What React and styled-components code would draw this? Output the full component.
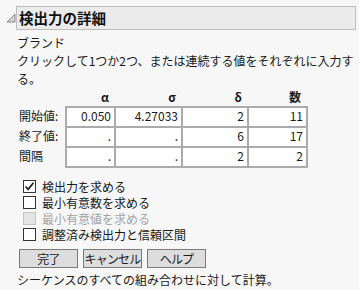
import React from "react";
import styled, { createGlobalStyle } from "styled-components";

const columns = ["α", "σ", "δ", "数"];
const rows = [
  { label: "開始値:", values: ["0.050", "4.27033", "2", "11"] },
  { label: "終了値:", values: [".", ".", "6", "17"] },
  { label: "間隔", values: [".", ".", "2", "2"] },
];
const options = [
  { text: "検出力を求める", checked: true },
  { text: "最小有意数を求める" },
  { text: "最小有意値を求める", disabled: true },
  { text: "調整済み検出力と信頼区間" },
];

function CheckMark() {
  return (
    <svg width="11" height="11" viewBox="0 0 11 11">
      <path d="M1.5 5.5 L4.2 8.3 L9.5 1.8" fill="none" stroke="#222" strokeWidth="1.8" />
    </svg>
  );
}

export default function App() {
  return (
    <Page>
      <GlobalStyle />
      <HeaderRow>
        <Disclosure width="10" height="10" viewBox="0 0 10 10">
          <polygon points="1,9 9,1 9,9" fill="#d4d4d4" stroke="#8a8a8a" strokeWidth="1" />
        </Disclosure>
        <TitleBox>検出力の詳細</TitleBox>
      </HeaderRow>
      <Content>
        <Line>ブランド</Line>
        <Line>クリックして1つか2つ、または連続する値をそれぞれに入力する。</Line>
        <Table>
          <span />
          {columns.map((c) => (
            <ColHead key={c}>{c}</ColHead>
          ))}
          {rows.map((r) => (
            <React.Fragment key={r.label}>
              <RowLabel>{r.label}</RowLabel>
              <Cells>
                {r.values.map((v, i) => (
                  <Cell key={i}>{v}</Cell>
                ))}
              </Cells>
            </React.Fragment>
          ))}
        </Table>
        <Options>
          {options.map((o) => (
            <Option key={o.text} $disabled={o.disabled}>
              <Box $disabled={o.disabled}>{o.checked && <CheckMark />}</Box>
              {o.text}
            </Option>
          ))}
        </Options>
        <Buttons>
          <Button>完了</Button>
          <Button>キャンセル</Button>
          <Button>ヘルプ</Button>
        </Buttons>
        <Line>シーケンスのすべての組み合わせに対して計算。</Line>
      </Content>
    </Page>
  );
}

const GlobalStyle = createGlobalStyle`
  body {
    margin: 0;
    background: #f7f7f7;
    font-family: "Noto Sans CJK JP", "Noto Sans", sans-serif;
    font-size: 12px;
    color: #1a1a1a;
  }
`;

const Page = styled.div`
  width: 359px;
  height: 290px;
  overflow: hidden;
`;

const HeaderRow = styled.div`
  display: flex;
  align-items: center;
  padding: 6px 3px 0 6px;
`;

const Disclosure = styled.svg`
  flex: none;
`;

const TitleBox = styled.div`
  flex: 1;
  height: 22px;
  border: 1px solid #bdbdbd;
  background: #ebebeb;
  font-weight: bold;
  font-size: 14.5px;
  line-height: 22px;
  padding-left: 2px;
  color: #111;
`;

const Content = styled.div`
  padding: 4px 2px 0 17px;
`;

const Line = styled.div`
  line-height: 18px;
`;

const Table = styled.div`
  display: grid;
  grid-template-columns: 46px 50px 67px 66px 59px;
  grid-template-rows: 18px repeat(3, 20px);
  margin-left: 2px;
`;

const ColHead = styled.div`
  font-weight: bold;
  text-align: right;
  padding-right: 6px;
  line-height: 18px;
`;

const RowLabel = styled.div`
  grid-column: 1;
  line-height: 20px;
`;

const Cells = styled.div`
  display: contents;
`;

const Cell = styled.div`
  background: #fff;
  border: 2px solid #ababab;
  margin: 0 -1px -2px -1px;
  text-align: right;
  padding-right: 3px;
  line-height: 16px;
  overflow: hidden;
  white-space: nowrap;
  &:first-child {
    margin-left: 0;
  }
`;

const Options = styled.div`
  display: flex;
  flex-direction: column;
  padding: 12px 0 0 6px;
`;

const Option = styled.label`
  display: flex;
  align-items: center;
  gap: 6px;
  height: 16px;
  color: ${(p) => (p.$disabled ? "#a4a4a4" : "#1a1a1a")};
`;

const Box = styled.span`
  width: 11px;
  height: 11px;
  border: 1px solid ${(p) => (p.$disabled ? "#c4c4c4" : "#333")};
  background: ${(p) => (p.$disabled ? "#e4e4e4" : "#fff")};
  display: flex;
  align-items: center;
  justify-content: center;
`;

const Buttons = styled.div`
  display: flex;
  gap: 5px;
  padding: 7px 0 3px 2px;
`;

const Button = styled.button`
  width: 59px;
  height: 19px;
  padding: 0;
  border: 1px solid #7a7a7a;
  background: #dddddd;
  font-family: inherit;
  font-size: 12px;
  letter-spacing: -0.8px;
  white-space: nowrap;
  color: #1a1a1a;
  line-height: 16px;
`;
